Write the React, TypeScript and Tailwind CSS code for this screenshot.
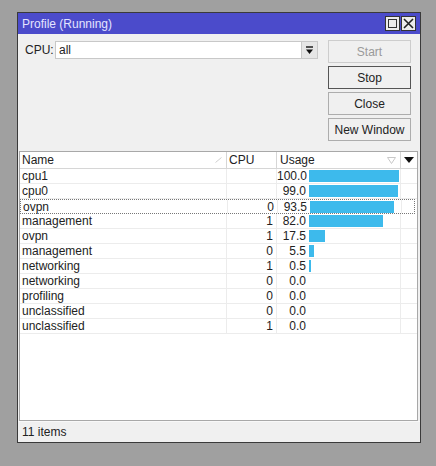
import React from 'react';

const rows = [
  { name: 'cpu1', cpu: '', usage: 100.0 },
  { name: 'cpu0', cpu: '', usage: 99.0 },
  { name: 'ovpn', cpu: '0', usage: 93.5, focused: true },
  { name: 'management', cpu: '1', usage: 82.0 },
  { name: 'ovpn', cpu: '1', usage: 17.5 },
  { name: 'management', cpu: '0', usage: 5.5 },
  { name: 'networking', cpu: '1', usage: 0.5 },
  { name: 'networking', cpu: '0', usage: 0.0 },
  { name: 'profiling', cpu: '0', usage: 0.0 },
  { name: 'unclassified', cpu: '0', usage: 0.0 },
  { name: 'unclassified', cpu: '1', usage: 0.0 },
];

const WinButton = ({ children, variant }: { children: React.ReactNode; variant?: string }) => {
  let cls = 'border-[#adadad] text-[#222]';
  if (variant === 'disabled') cls = 'border-[#cdcdcd] text-[#9a9a9a]';
  if (variant === 'default') cls = 'border-[#555] text-[#222]';
  return (
    <div className={`h-[23px] flex items-center justify-center border bg-[#f0f0f0] ${cls}`}>
      {children}
    </div>
  );
};

const App = () => {
  return (
    <div
      className="w-[436px] h-[466px] bg-[#a0a0a0] pl-[17px] pt-[12px] text-[12px] text-[#222]"
      style={{ fontFamily: '"Liberation Sans", Arial, sans-serif' }}
    >
      <div className="w-[404px] h-[431px] border border-[#3a3a3a] flex flex-col bg-[#f0f0f0]">
        {/* title bar */}
        <div className="h-[21px] bg-[#4b4bcb] flex items-center justify-between pl-[4px] pr-[4px]">
          <span className="text-[#e4e4ff] text-[12px]">Profile (Running)</span>
          <div className="flex gap-[1px]">
            <div className="w-[15px] h-[15px] bg-[#ececec] border border-[#333] flex items-center justify-center">
              <div className="w-[9px] h-[9px] border border-[#333]" />
            </div>
            <div className="w-[15px] h-[15px] bg-[#ececec] border border-[#333] flex items-center justify-center">
              <svg width="11" height="11" viewBox="0 0 11 11">
                <path d="M1 1 L10 10 M10 1 L1 10" stroke="#222" strokeWidth="1.6" />
              </svg>
            </div>
          </div>
        </div>

        {/* top controls */}
        <div className="h-[117px] flex pl-[7px] pt-[6px]">
          <div className="flex items-start pt-[1px]">
            <span className="w-[30px] leading-[18px] whitespace-nowrap">CPU:</span>
            <div className="w-[263px] h-[18px] bg-white border border-[#c8c8c8] flex items-center justify-between">
              <span className="pl-[3px]">all</span>
              <div className="w-[16px] h-full bg-[#e6e6e6] border-l border-[#c8c8c8] flex items-center justify-center">
                <svg width="9" height="9" viewBox="0 0 9 9">
                  <path d="M1 1 H8" stroke="#111" strokeWidth="1.4" />
                  <path d="M1 3.5 H8 L4.5 8 Z" fill="#111" />
                </svg>
              </div>
            </div>
          </div>
          <div className="ml-[10px] w-[83px] flex flex-col gap-[3px]">
            <WinButton variant="disabled">Start</WinButton>
            <WinButton variant="default">Stop</WinButton>
            <WinButton>Close</WinButton>
            <WinButton>New Window</WinButton>
          </div>
        </div>

        {/* table */}
        <div className="flex-1 ml-[1px] mr-[2px] border border-[#a8a8a8] bg-white flex flex-col">
          <div className="h-[17px] flex border-b border-[#d6d6d6] bg-white">
            <div className="w-[207px] flex items-center justify-between pl-[2px] pr-[4px] border-r border-[#d6d6d6]">
              <span>Name</span>
              <svg width="7" height="6" viewBox="0 0 7 6">
                <path d="M0.5 5.5 L6.5 0.5" stroke="#d0d0d0" strokeWidth="1" />
              </svg>
            </div>
            <div className="w-[50px] flex items-center pl-[2px] border-r border-[#d6d6d6]">CPU</div>
            <div className="w-[124px] flex items-center justify-between pl-[3px] pr-[4px] border-r border-[#d6d6d6]">
              <span>Usage</span>
              <svg width="9" height="7" viewBox="0 0 9 7">
                <path d="M0.5 0.5 H8.5 L4.5 6.5 Z" fill="none" stroke="#c8c8c8" strokeWidth="1" />
              </svg>
            </div>
            <div className="flex-1 flex items-center justify-center">
              <svg width="10" height="6" viewBox="0 0 10 6">
                <path d="M0 0 H10 L5 6 Z" fill="#111" />
              </svg>
            </div>
          </div>
          {rows.map((r, i) => (
            <div
              key={i}
              className={`h-[15px] flex border-b ${r.focused ? 'border border-dotted border-[#777] mr-[2px]' : 'border-[#ececec]'}`}
            >
              <div className="w-[207px] flex items-center pl-[2px] border-r border-[#ececec]">{r.name}</div>
              <div className="w-[50px] flex items-center justify-end pr-[3px] border-r border-[#ececec]">{r.cpu}</div>
              <div className="w-[124px] flex items-center border-r border-[#ececec]">
                <span className="w-[29px] text-right">{r.usage.toFixed(1)}</span>
                {r.usage > 0 && (
                  <div
                    className="ml-[3px] h-[12px] bg-[#3dbaec]"
                    style={{ width: `${Math.max(2, Math.round(r.usage * 0.9))}px` }}
                  />
                )}
              </div>
              <div className="flex-1" />
            </div>
          ))}
          <div className="flex-1" />
        </div>

        {/* status bar */}
        <div className="h-[21px] flex items-center pl-[4px] border-t border-[#f8f8f8]">11 items</div>
      </div>
    </div>
  );
};

export default App;
